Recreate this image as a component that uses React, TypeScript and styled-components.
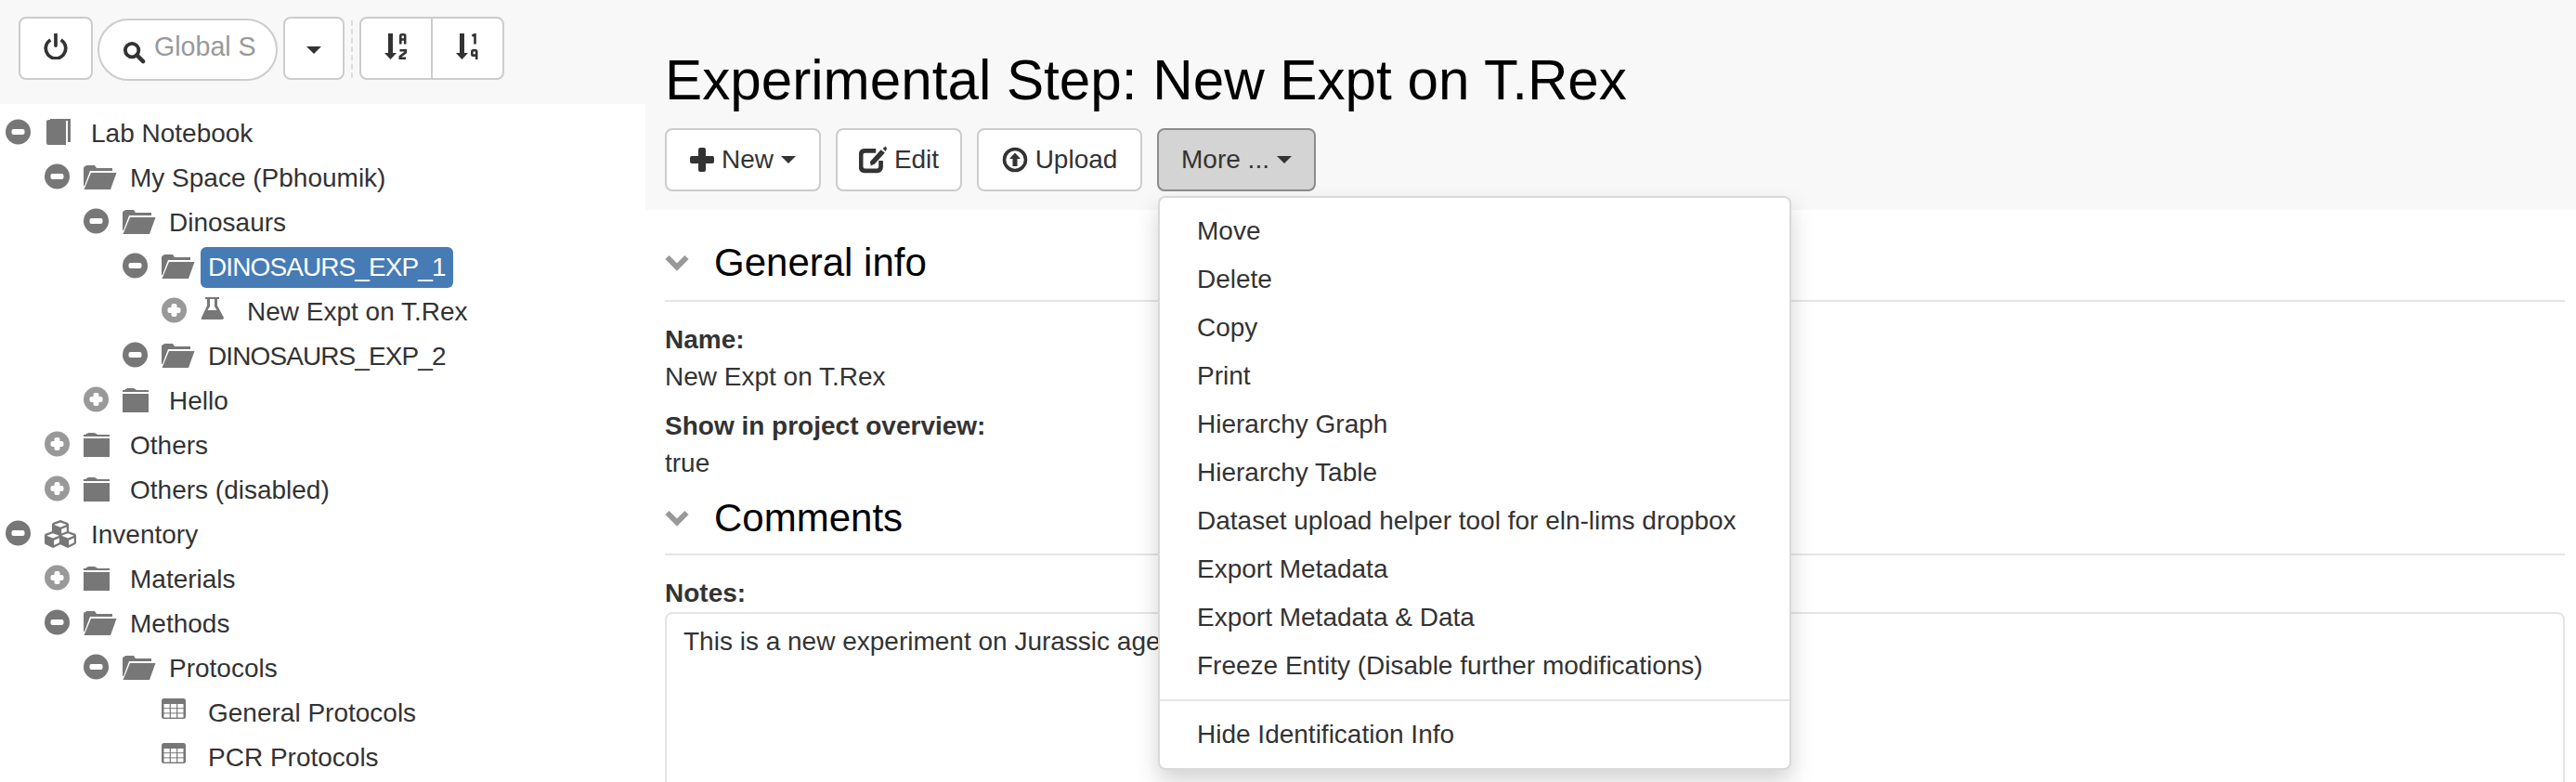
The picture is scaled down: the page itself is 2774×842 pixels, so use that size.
import React from 'react'
import styled, { createGlobalStyle } from 'styled-components'
import { FaCubes } from 'react-icons/fa'

type IconName = 'book' | 'open' | 'closed' | 'flask' | 'table' | 'cubes'

type TreeRow = {
  label: string
  level: number
  icon: IconName
  toggle?: 'minus' | 'plus'
  selected?: boolean
  tight?: boolean
}

const treeRows: TreeRow[] = [
  { label: 'Lab Notebook', level: 0, icon: 'book', toggle: 'minus' },
  { label: 'My Space (Pbhoumik)', level: 1, icon: 'open', toggle: 'minus' },
  { label: 'Dinosaurs', level: 2, icon: 'open', toggle: 'minus' },
  { label: 'DINOSAURS_EXP_1', level: 3, icon: 'open', toggle: 'minus', selected: true, tight: true },
  { label: 'New Expt on T.Rex', level: 4, icon: 'flask', toggle: 'plus' },
  { label: 'DINOSAURS_EXP_2', level: 3, icon: 'open', toggle: 'minus', tight: true },
  { label: 'Hello', level: 2, icon: 'closed', toggle: 'plus' },
  { label: 'Others', level: 1, icon: 'closed', toggle: 'plus' },
  { label: 'Others (disabled)', level: 1, icon: 'closed', toggle: 'plus' },
  { label: 'Inventory', level: 0, icon: 'cubes', toggle: 'minus' },
  { label: 'Materials', level: 1, icon: 'closed', toggle: 'plus' },
  { label: 'Methods', level: 1, icon: 'open', toggle: 'minus' },
  { label: 'Protocols', level: 2, icon: 'open', toggle: 'minus' },
  { label: 'General Protocols', level: 3, icon: 'table' },
  { label: 'PCR Protocols', level: 3, icon: 'table' }
]

const menuItems = [
  'Move',
  'Delete',
  'Copy',
  'Print',
  'Hierarchy Graph',
  'Hierarchy Table',
  'Dataset upload helper tool for eln-lims dropbox',
  'Export Metadata',
  'Export Metadata & Data',
  'Freeze Entity (Disable further modifications)'
]

function ToggleIcon({ kind }: { kind: 'minus' | 'plus' }) {
  return (
    <svg width='27' height='28' viewBox='0 0 27 28'>
      <ellipse cx='13.5' cy='14' rx='13.5' ry='13.5' fill={kind === 'minus' ? '#777' : '#999'} />
      <rect x='6.5' y='11' width='14' height='6' rx='2' fill='#fff' />
      {kind === 'plus' && <rect x='10.5' y='7' width='6' height='14' rx='2' fill='#fff' />}
    </svg>
  )
}

function TreeIcon({ name }: { name: IconName }) {
  if (name === 'cubes') {
    return <FaCubes size={34} color='#777' />
  }
  return (
    <svg width='36' height='32' viewBox='0 0 36 32' fill='#777'>
      {name === 'book' && (
        <>
          <path d='M2 5 Q2 3 5 3 H23 V30 H4 Q2 30 2 28Z' />
          <path d='M6 2 H28 V27 H25 V4 H6Z' />
        </>
      )}
      {name === 'open' && (
        <>
          <path d='M0 7 Q0 5 2 5 L3 4 H12 L14 7 H31 V10 H7 L1 26 H0Z' />
          <path d='M8 12 H35.5 L29 30 H0.5Z' />
        </>
      )}
      {name === 'closed' && (
        <>
          <path d='M0 6 L2 6 Q4 4 6 4 H11 Q13 4 15 6 H28 V8 H0Z' />
          <rect x='0' y='10' width='28' height='20' />
        </>
      )}
      {name === 'flask' && (
        <>
          <path d='M5 2 H20 V4 H18 V11 L25 24 Q25 26 23 26 H2 Q0 26 1 24 L7 11 V4 H5Z' />
          <path d='M10 4 H15 V12 L17.5 16 H7.5 L10 12Z' fill='#fff' />
        </>
      )}
      {name === 'table' && (
        <>
          <rect x='0' y='2' width='26' height='22' rx='2.5' />
          {[0, 1, 2].map(col =>
            [0, 1, 2].map(row => (
              <rect key={`${col}-${row}`} x={2.5 + col * 7.4} y={8 + row * 5.2} width='6.2' height='4.2' fill='#fff' />
            ))
          )}
        </>
      )}
    </svg>
  )
}

function SortIcon({ kind }: { kind: 'alpha' | 'numeric' }) {
  return (
    <svg width='25' height='28' viewBox='0 0 25 28' fill='none' stroke='#333' strokeWidth='2.6'>
      <path d='M4 0 H9 V21 H13 L6.5 28 L0 21 H4Z' fill='#333' stroke='none' />
      {kind === 'alpha' ? (
        <>
          <path d='M17.3 11.5 V2.5 Q17.3 1.3 18.5 1.3 H21 Q22.2 1.3 22.2 2.5 V11.5 M17.3 6.5 H22.2' />
          <path d='M16.5 18.3 H22.7 V20.5 L16.8 25 V26.7 H23' />
        </>
      ) : (
        <>
          <path d='M17.3 2.6 L20.5 1.2 V11.5' />
          <path d='M22.2 23.6 H18.5 Q17.3 23.6 17.3 22.4 V19.5 Q17.3 18.3 18.5 18.3 H21 Q22.2 18.3 22.2 19.5 V28' />
        </>
      )}
    </svg>
  )
}

function Chevron() {
  return (
    <ChevronIcon width='26' height='18' viewBox='0 0 26 18' fill='none' stroke='#999' strokeWidth='6'>
      <path d='M2.5 3 L13 13.5 L23.5 3' />
    </ChevronIcon>
  )
}

export default function App() {
  return (
    <Page>
      <GlobalStyle />
      <LeftColumn>
        <Toolbar>
          <ToolButton $width={80}>
            <PowerIcon width='28' height='28' viewBox='0 0 28 30' fill='none' stroke='#333' strokeWidth='4'>
              <path d='M8 7.5 A11.5 11.5 0 1 0 20 7.5' />
              <path d='M14 1 V14' strokeLinecap='round' />
            </PowerIcon>
          </ToolButton>
          <SearchBox>
            <svg width='25' height='25' viewBox='0 0 26 26' fill='none' stroke='#333'>
              <circle cx='10.5' cy='10.5' r='7.5' strokeWidth='4' />
              <path d='M16 16 L23 23' strokeWidth='4.5' strokeLinecap='round' />
            </svg>
            <SearchInput placeholder='Global S' readOnly />
          </SearchBox>
          <ToolButton $width={66}>
            <ToolCaret />
          </ToolButton>
          <ToolSeparator />
          <SortGroup>
            <SortButton>
              <SortIcon kind='alpha' />
            </SortButton>
            <SortButton>
              <SortIcon kind='numeric' />
            </SortButton>
          </SortGroup>
        </Toolbar>
        <Tree>
          {treeRows.map(row => (
            <Row key={row.label} $level={row.level}>
              <ToggleSlot>{row.toggle && <ToggleIcon kind={row.toggle} />}</ToggleSlot>
              <IconSlot>
                <TreeIcon name={row.icon} />
              </IconSlot>
              <RowLabel $selected={row.selected} $tight={row.tight}>
                {row.label}
              </RowLabel>
            </Row>
          ))}
        </Tree>
      </LeftColumn>
      <RightColumn>
        <Header>
          <Title>Experimental Step: New Expt on T.Rex</Title>
          <Actions>
            <ActionButton $width={168}>
              <svg width='26' height='26' viewBox='0 0 26 26' fill='#333'>
                <path d='M9 2 Q9 0 11 0 H15 Q17 0 17 2 V9 H24 Q26 9 26 11 V15 Q26 17 24 17 H17 V24 Q17 26 15 26 H11 Q9 26 9 24 V17 H2 Q0 17 0 15 V11 Q0 9 2 9 H9Z' />
              </svg>
              New
              <Caret />
            </ActionButton>
            <ActionButton $width={136}>
              <svg width='30' height='30' viewBox='0 0 28 28' fill='none' stroke='#333'>
                <path d='M17 5 H6 Q2 5 2 9 V21 Q2 25 6 25 H18 Q22 25 22 21 V15' strokeWidth='4.4' />
                <path d='M11 16 L12 20 L16 18 L26 7 L22 4Z' fill='#333' stroke='none' />
                <path d='M24 2.5 L27 0.5 L28 3 L26.5 5.5Z' fill='#333' stroke='none' />
              </svg>
              Edit
            </ActionButton>
            <ActionButton $width={178}>
              <svg width='28' height='28' viewBox='0 0 28 28' fill='none' stroke='#333'>
                <circle cx='14' cy='14' r='11.5' strokeWidth='3.6' />
                <path d='M14 6.5 L20 13 H16.5 V21 H11.5 V13 H8Z' fill='#333' stroke='none' />
              </svg>
              Upload
            </ActionButton>
            <MoreWrapper>
              <ActionButton $width={171} $active>
                More ...
                <Caret />
              </ActionButton>
              <DropdownMenu>
                {menuItems.map(item => (
                  <MenuItem key={item}>{item}</MenuItem>
                ))}
                <MenuDivider />
                <MenuItem>Hide Identification Info</MenuItem>
              </DropdownMenu>
            </MoreWrapper>
          </Actions>
        </Header>
        <Content>
          <SectionTitle>
            <Chevron />
            General info
          </SectionTitle>
          <FieldLabel>Name:</FieldLabel>
          <FieldValue>New Expt on T.Rex</FieldValue>
          <FieldLabel>Show in project overview:</FieldLabel>
          <FieldValue>true</FieldValue>
          <SectionTitle $compact>
            <Chevron />
            Comments
          </SectionTitle>
          <FieldLabel>Notes:</FieldLabel>
          <NotesBox>This is a new experiment on Jurassic age</NotesBox>
        </Content>
      </RightColumn>
    </Page>
  )
}

const GlobalStyle = createGlobalStyle`
  html, body {
    margin: 0;
    padding: 0;
    background: #fff;
  }
  body {
    font-family: "Liberation Sans", Arial, sans-serif;
    font-size: 28px;
    color: #333;
  }
  * {
    box-sizing: border-box;
  }
`

const Page = styled.div`
  display: grid;
  grid-template-columns: 695px 1fr;
  width: 2774px;
  height: 842px;
  overflow: hidden;
`

const LeftColumn = styled.div`
  display: flex;
  flex-direction: column;
`

const Toolbar = styled.div`
  display: flex;
  align-items: flex-start;
  height: 112px;
  padding: 18px 0 0 20px;
  background: #f8f8f8;
`

const ToolButton = styled.div<{ $width: number }>`
  display: flex;
  align-items: center;
  justify-content: center;
  flex: none;
  width: ${({ $width }) => $width}px;
  height: 68px;
  margin-right: 5px;
  background: #fff;
  border: 2px solid #ccc;
  border-radius: 8px;
`

const PowerIcon = styled.svg`
  margin-bottom: 5px;
`

const SearchBox = styled.label`
  display: flex;
  align-items: center;
  gap: 9px;
  flex: none;
  width: 194px;
  height: 67px;
  margin: 2px 6px 0 0;
  padding: 0 8px 0 25px;
  background: #fff;
  border: 2px solid #ccc;
  border-radius: 34px;

  svg {
    flex: none;
    margin-top: 5px;
  }
`

const SearchInput = styled.input`
  width: 100%;
  min-width: 0;
  padding: 0 0 6px;
  border: none;
  outline: none;
  background: transparent;
  font: inherit;
  font-size: 28.6px;

  &::placeholder {
    color: #999;
    opacity: 1;
  }
`

const ToolSeparator = styled.div`
  flex: none;
  width: 2px;
  height: 62px;
  margin: 4px 7px 0 2px;
  border-left: 2px dashed #ddd;
`

const SortGroup = styled.div`
  display: flex;
  flex: none;
  width: 156px;
  height: 68px;
  background: #fff;
  border: 2px solid #ccc;
  border-radius: 8px;
`

const SortButton = styled.div`
  display: flex;
  align-items: flex-start;
  justify-content: center;
  flex: 1;
  padding-top: 16px;

  & + & {
    border-left: 2px solid #ccc;
  }
`

const Tree = styled.div`
  display: flex;
  flex-direction: column;
  padding-top: 8px;
`

const Row = styled.div<{ $level: number }>`
  display: flex;
  align-items: flex-start;
  height: 48px;
  padding-left: ${({ $level }) => 6 + $level * 42}px;
`

const ToggleSlot = styled.span`
  display: flex;
  flex: none;
  width: 27px;
  height: 28px;
  margin: 8px 15px 0 0;
`

const IconSlot = styled.span`
  display: flex;
  flex: none;
  width: 36px;
  height: 32px;
  margin-top: 6px;
`

const RowLabel = styled.span<{ $selected?: boolean; $tight?: boolean }>`
  height: 44px;
  margin: 2px 0 0 6px;
  padding: 0 8px;
  line-height: 44px;
  white-space: nowrap;
  border-radius: 6px;
  letter-spacing: ${({ $tight }) => ($tight ? '-0.9px' : '0')};
  color: ${({ $selected }) => ($selected ? '#fff' : '#333')};
  background: ${({ $selected }) => ($selected ? '#477bb5' : 'transparent')};
`

const RightColumn = styled.div`
  display: flex;
  flex-direction: column;
  min-width: 0;
`

const Header = styled.header`
  height: 226px;
  padding-left: 21px;
  background: #f8f8f8;
`

const Title = styled.h1`
  margin: 0;
  padding-top: 54px;
  font-size: 60.2px;
  font-weight: 400;
  line-height: 66px;
  color: #000;
  white-space: nowrap;
`

const Actions = styled.div`
  display: flex;
  gap: 16px;
  margin-top: 18px;
`

const ActionButton = styled.div<{ $active?: boolean; $width: number }>`
  display: flex;
  align-items: center;
  justify-content: center;
  gap: 8px;
  width: ${({ $width }) => $width}px;
  height: 68px;
  white-space: nowrap;
  background: ${({ $active }) => ($active ? '#d4d4d4' : '#fff')};
  border: 2px solid ${({ $active }) => ($active ? '#8c8c8c' : '#ccc')};
  border-radius: 8px;
`

const Caret = styled.span`
  flex: none;
  width: 0;
  height: 0;
  border-top: 8px solid #333;
  border-left: 8px solid transparent;
  border-right: 8px solid transparent;
`

const ToolCaret = styled(Caret)`
  margin-top: 4px;
`

const MoreWrapper = styled.div`
  position: relative;
`

const DropdownMenu = styled.div`
  position: absolute;
  z-index: 10;
  top: 73px;
  left: 1px;
  width: 682px;
  padding: 10px 0;
  background: #fff;
  border: 2px solid rgba(0, 0, 0, 0.15);
  border-radius: 8px;
  box-shadow: 0 12px 24px rgba(0, 0, 0, 0.175);
`

const MenuItem = styled.div`
  padding: 0 40px;
  line-height: 52px;
  white-space: nowrap;
`

const MenuDivider = styled.div`
  height: 2px;
  margin: 10px 0;
  background: #e5e5e5;
`

const Content = styled.main`
  padding: 0 12px 0 21px;
`

const SectionTitle = styled.h2<{ $compact?: boolean }>`
  display: flex;
  align-items: center;
  gap: 27px;
  height: ${({ $compact }) => ($compact ? '65px' : '99px')};
  margin: ${({ $compact }) => ($compact ? '10px' : '0')} 0 22px;
  padding-top: ${({ $compact }) => ($compact ? '0' : '30px')};
  padding-bottom: 14px;
  font-size: 42px;
  font-weight: 400;
  line-height: 52px;
  color: #000;
  border-bottom: 2px solid #e5e5e5;
`

const ChevronIcon = styled.svg`
  flex: none;
`

const FieldLabel = styled.div`
  font-weight: 700;
  line-height: 38px;
`

const FieldValue = styled.div`
  margin-bottom: 13px;
  line-height: 42px;
`

const NotesBox = styled.div`
  height: 320px;
  margin-top: 1px;
  padding: 10px 18px;
  line-height: 40px;
  border: 2px solid #e5e5e5;
  border-radius: 8px;
`
